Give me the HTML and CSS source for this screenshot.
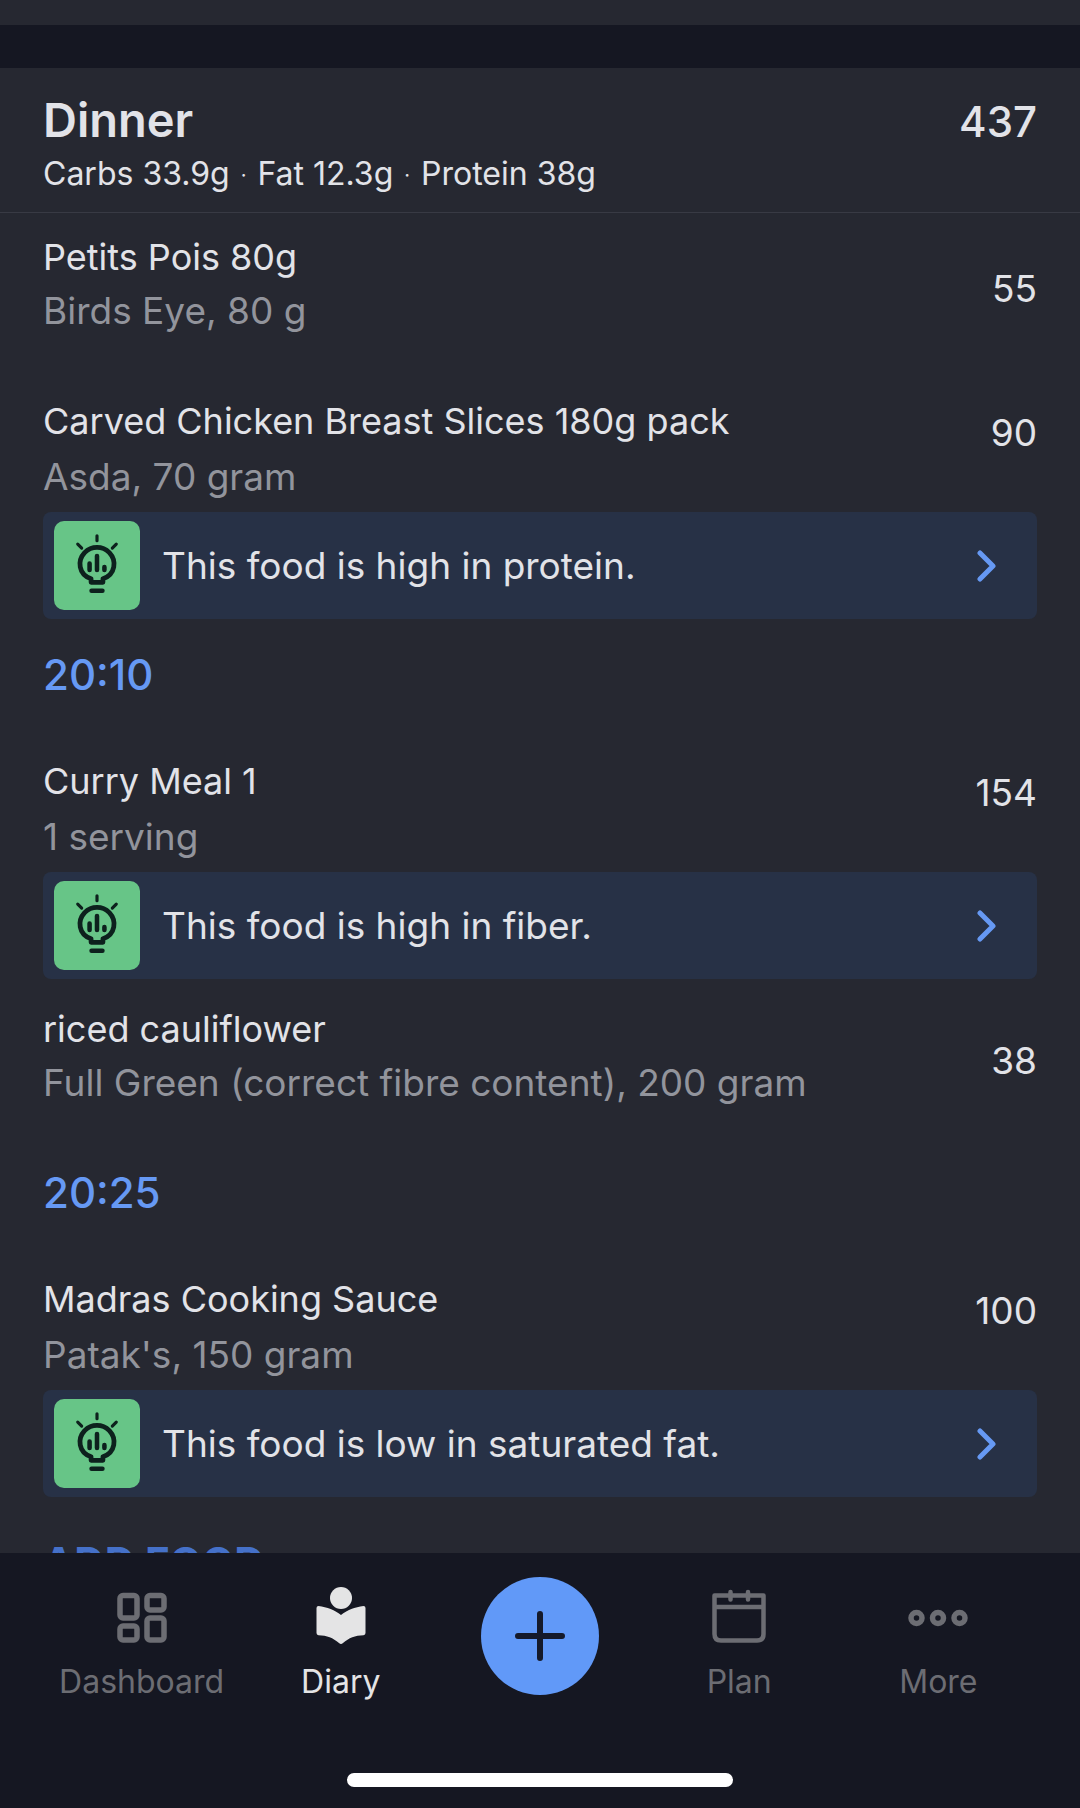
FILE: index.html
```html
<!DOCTYPE html>
<html lang="en">
<head>
<meta charset="utf-8">
<meta name="viewport" content="width=device-width, initial-scale=1">
<title>Food diary</title>
<link rel="stylesheet" href="styles.css">
</head>
<body>
<svg class="sprite" aria-hidden="true">
  <symbol id="bulb" viewBox="0 0 86 90">
    <g fill="none" stroke="currentColor" stroke-linecap="round" stroke-linejoin="round">
      <path stroke-width="4.800" d="M37 58.500C24 54 23 40 30.500 32C37.500 25 48.500 25 55.500 32C63 40 62 54 49 58.500V62H37Z"/>
      <path stroke-width="3.200" d="M43 15v5M23.500 23.500l4 4M62.500 23.500l-4 4"/>
      <path stroke-width="4.600" d="M35.500 43v6.500M43 35.500v14M50.500 46.500v3M37.500 70.500h11"/>
    </g>
  </symbol>
  <symbol id="chevron" viewBox="0 0 20 32">
    <path d="M3 3L16 16L3 29" fill="none" stroke="currentColor" stroke-width="5" stroke-linecap="round" stroke-linejoin="round"/>
  </symbol>
</svg>

<main class="diary">
  <section class="previous-meal"></section>

  <section class="meal">
    <header class="meal-header">
      <div>
        <h1 class="meal-title">Dinner</h1>
        <p class="macros">Carbs 33.9g <span class="dot">·</span> Fat 12.3g <span class="dot">·</span> Protein 38g</p>
      </div>
      <span class="meal-total">437</span>
    </header>

    <article class="item">
      <div class="entry">
        <div><h2 class="name">Petits Pois 80g</h2><p class="detail">Birds Eye, 80 g</p></div>
        <span class="value">55</span>
      </div>
    </article>

    <article class="item item-insight">
      <div class="entry">
        <div><h2 class="name">Carved Chicken Breast Slices 180g pack</h2><p class="detail">Asda, 70 gram</p></div>
        <span class="value">90</span>
      </div>
      <button class="insight" type="button">
        <svg class="insight-icon" aria-hidden="true"><use href="#bulb"/></svg>
        <span class="insight-text">This food is high in protein.</span>
        <svg class="chevron" aria-hidden="true"><use href="#chevron"/></svg>
      </button>
    </article>

    <button class="time" type="button">20:10</button>

    <article class="item item-insight">
      <div class="entry">
        <div><h2 class="name">Curry Meal 1</h2><p class="detail">1 serving</p></div>
        <span class="value">154</span>
      </div>
      <button class="insight" type="button">
        <svg class="insight-icon" aria-hidden="true"><use href="#bulb"/></svg>
        <span class="insight-text">This food is high in fiber.</span>
        <svg class="chevron" aria-hidden="true"><use href="#chevron"/></svg>
      </button>
    </article>

    <article class="item">
      <div class="entry">
        <div><h2 class="name">riced cauliflower</h2><p class="detail">Full Green (correct fibre content), 200 gram</p></div>
        <span class="value">38</span>
      </div>
    </article>

    <button class="time" type="button">20:25</button>

    <article class="item item-insight">
      <div class="entry">
        <div><h2 class="name">Madras Cooking Sauce</h2><p class="detail">Patak's, 150 gram</p></div>
        <span class="value">100</span>
      </div>
      <button class="insight" type="button">
        <svg class="insight-icon" aria-hidden="true"><use href="#bulb"/></svg>
        <span class="insight-text">This food is low in saturated fat.</span>
        <svg class="chevron" aria-hidden="true"><use href="#chevron"/></svg>
      </button>
    </article>

    <button class="add-food" type="button">ADD FOOD</button>
  </section>
</main>

<footer class="footer">
  <nav class="tabs" aria-label="Main">
    <a class="tab" href="#dashboard">
      <svg class="tab-icon" viewBox="0 0 60 60" aria-hidden="true"><g fill="none" stroke="currentColor" stroke-width="5.500"><rect x="8" y="8.500" width="17" height="22.500" rx="3"/><rect x="35" y="8.500" width="17" height="14.500" rx="3"/><rect x="8" y="39" width="17" height="14" rx="3"/><rect x="35" y="31" width="17" height="22" rx="3"/></g></svg>
      <span>Dashboard</span>
    </a>
    <a class="tab tab-active" href="#diary" aria-current="page">
      <svg class="tab-icon" viewBox="0 0 60 60" aria-hidden="true"><g fill="currentColor"><circle cx="30" cy="11" r="11"/><path d="M7.500 19C16 20 24 23 30 28C36 23 44 20 52.500 19Q54.500 19 54.500 21V46Q54.500 48 52.500 48.300C44 48.500 38 51 32 56Q30 58 28 56C22 51 16 48.500 7.500 48.300Q5.500 48 5.500 46V21Q5.500 19 7.500 19Z"/></g></svg>
      <span>Diary</span>
    </a>
    <button class="add" type="button" aria-label="Add">
      <svg class="plus" viewBox="0 0 50 50" aria-hidden="true"><path d="M3 25H47M25 3V47" stroke="currentColor" stroke-width="6" stroke-linecap="round"/></svg>
    </button>
    <a class="tab" href="#plan">
      <svg class="tab-icon" viewBox="0 0 60 60" aria-hidden="true"><g fill="none" stroke="currentColor" stroke-width="4.500" stroke-linecap="round" stroke-linejoin="round"><path d="M5.500 8.500H54.500V47Q54.500 53.500 48 53.500H12Q5.500 53.500 5.500 47ZM6 20H54M21.500 5V12.500M39 5V12.500"/></g></svg>
      <span>Plan</span>
    </a>
    <a class="tab" href="#more">
      <svg class="tab-icon" viewBox="0 0 60 60" aria-hidden="true"><g fill="none" stroke="currentColor" stroke-width="5.500"><circle cx="8.500" cy="31" r="5.500"/><circle cx="30" cy="31" r="5.500"/><circle cx="51.500" cy="31" r="5.500"/></g></svg>
      <span>More</span>
    </a>
  </nav>
  <div class="home-indicator"></div>
</footer>
</body>
</html>
```
FILE: styles.css
```css
* {
  box-sizing: border-box;
}

body {
  margin: 0;
  height: 100vh;
  display: flex;
  flex-direction: column;
  background: #151722;
  color: #e2e3e8;
  font-family: Inter, "Liberation Sans", sans-serif;
  font-size: 37px;
}

h1, h2, p {
  margin: 0;
  font-size: inherit;
  font-weight: 400;
}

button {
  border: 0;
  padding: 0;
  background: none;
  color: inherit;
  font: inherit;
  text-align: left;
}

.sprite {
  display: none;
}

.diary {
  flex: 1;
  min-height: 0;
  overflow-y: auto;
  scrollbar-width: none;
}

.previous-meal {
  height: 25px;
  margin-bottom: 43px;
  background: #262831;
}

.meal {
  background: #262831;
}

.meal-header {
  display: flex;
  align-items: baseline;
  justify-content: space-between;
  padding: 22px 43px 14px;
  border-bottom: 1px solid #383a44;
}

.meal-title {
  font-size: 47px;
  font-weight: 600;
  line-height: 60px;
}

.macros {
  font-size: 32px;
  line-height: 48px;
}

.dot {
  margin: 0 2px;
  font-size: 20px;
  line-height: 20px;
  vertical-align: 3px;
}

.meal-total {
  font-size: 42px;
  font-weight: 500;
  line-height: 56px;
}

.item {
  padding: 0 43px;
  margin-bottom: 6px;
}

.entry {
  display: flex;
  align-items: center;
  justify-content: space-between;
  height: 152px;
  line-height: 54px;
}

.entry > div {
  padding-bottom: 10px;
}

.name {
  font-size: 36px;
}

.detail {
  color: #92949c;
}

.item-insight .entry {
  height: auto;
  padding-top: 22px;
  line-height: 56px;
}

.item-insight .entry > div {
  padding-bottom: 0;
}

.item-insight .value {
  padding-bottom: 32px;
}

.insight {
  display: flex;
  align-items: center;
  width: 100%;
  height: 107px;
  margin-top: 7px;
  padding: 0 40px 0 11px;
  border-radius: 8px;
  background: #273146;
}

.insight-icon {
  width: 86px;
  height: 89px;
  border-radius: 10px;
  background: #67c587;
  color: #0d211d;
}

.insight-text {
  flex: 1;
  margin-left: 22px;
}

.chevron {
  width: 20px;
  height: 32px;
  color: #6699f4;
}

.time {
  display: block;
  padding: 23px 43px 29px;
  color: #6699f4;
  font-size: 42px;
  font-weight: 500;
  line-height: 54px;
}

.add-food {
  display: block;
  padding: 33px 43px;
  color: #4571c9;
  font-size: 42px;
  font-weight: 700;
  line-height: 54px;
}

.footer {
  display: flex;
  flex-direction: column;
  align-items: center;
  flex: none;
}

.tabs {
  display: grid;
  grid-template-columns: repeat(5, 1fr);
  justify-items: center;
  width: 100%;
  padding: 24px 42px 0;
}

.tab {
  display: flex;
  flex-direction: column;
  align-items: center;
  gap: 11px;
  padding-top: 10px;
  color: #6c6d73;
  font-size: 32px;
  line-height: 48px;
  text-decoration: none;
}

.tab-active {
  color: #e4e4e5;
}

.tab-icon {
  width: 60px;
  height: 60px;
}

.add {
  display: grid;
  place-items: center;
  width: 118px;
  height: 118px;
  border-radius: 50%;
  background: #6199f8;
  color: #151a2b;
}

.plus {
  width: 50px;
  height: 50px;
}

.home-indicator {
  width: 386px;
  height: 14px;
  margin: 67px 0 21px;
  border-radius: 7px;
  background: #ffffff;
}
```
